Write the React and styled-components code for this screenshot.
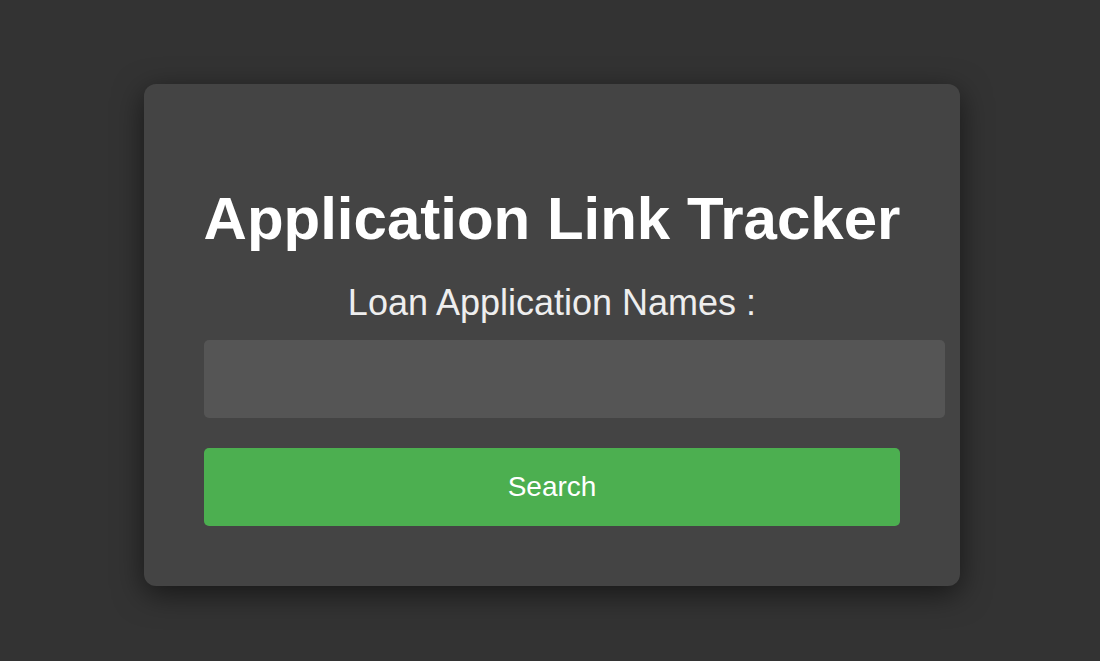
import React from 'react';
import styled, { createGlobalStyle } from 'styled-components';

const GlobalStyle = createGlobalStyle`
	html, body {
		margin: 0;
		padding: 0;
		background: #333333;
		font-family: 'Liberation Sans', Arial, sans-serif;
	}
`;

const Page = styled.div`
	min-height: 661px;
	display: flex;
	justify-content: center;
	align-items: flex-start;
	padding: 84px 0 0 4px;
	box-sizing: border-box;
`;

const Card = styled.div`
	width: 816px;
	box-sizing: border-box;
	padding: 101px 60px 60px;
	background: #444444;
	border-radius: 12px;
	box-shadow: 0 8px 30px rgba(0, 0, 0, 0.55);
	display: flex;
	flex-direction: column;
	align-items: stretch;
`;

const Title = styled.h1`
	margin: 0 -20px;
	font-size: 60px;
	font-weight: bold;
	color: #ffffff;
	text-align: center;
	line-height: 67px;
	white-space: nowrap;
`;

const Label = styled.label`
	margin-top: 31px;
	font-size: 36px;
	line-height: 39px;
	color: #eeeeee;
	text-align: center;
`;

const Input = styled.input`
	margin-top: 18px;
	width: calc(100% + 45px);
	height: 78px;
	box-sizing: border-box;
	padding: 0 20px;
	border: none;
	border-radius: 5px;
	background: #555555;
	color: #ffffff;
	font-size: 16px;
	font-family: inherit;
	outline: none;
`;

const Button = styled.button`
	margin-top: 30px;
	width: 100%;
	height: 78px;
	border: none;
	border-radius: 5px;
	background: #4caf50;
	color: #ffffff;
	font-size: 28px;
	font-family: inherit;
	cursor: pointer;
`;

function App() {
	return (
		<>
			<GlobalStyle />
			<Page>
				<Card>
					<Title>Application Link Tracker</Title>
					<Label htmlFor="names">Loan Application Names :</Label>
					<Input id="names" type="text" />
					<Button>Search</Button>
				</Card>
			</Page>
		</>
	);
}

export default App;
